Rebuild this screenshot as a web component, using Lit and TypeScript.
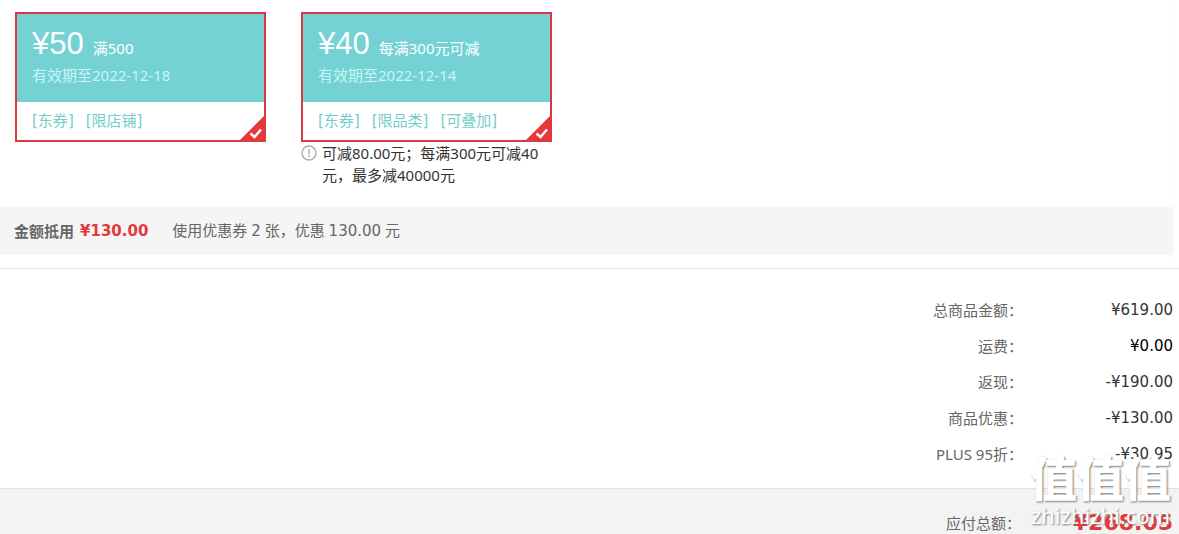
import { LitElement, html, css, nothing } from "lit";
import { customElement, property } from "lit/decorators.js";

interface Coupon {
  amount: string;
  condition: string;
  expiry: string;
  tags: string[];
  note?: string;
}

const coupons: Coupon[] = [
  { amount: "50", condition: "满500", expiry: "2022-12-18", tags: ["东券", "限店铺"] },
  {
    amount: "40",
    condition: "每满300元可减",
    expiry: "2022-12-14",
    tags: ["东券", "限品类", "可叠加"],
    note: "可减80.00元；每满300元可减40元，最多减40000元",
  },
];

const fees = [
  { label: "总商品金额", value: "¥619.00" },
  { label: "运费", value: "¥0.00", strong: true },
  { label: "返现", value: "-¥190.00" },
  { label: "商品优惠", value: "-¥130.00" },
  { label: "PLUS 95折", value: "-¥30.95" },
];

@customElement("coupon-card")
export class CouponCard extends LitElement {
  @property({ attribute: false }) coupon!: Coupon;

  static styles = css`
    :host {
      display: block;
      width: 251px;
    }
    .card {
      display: block;
      position: relative;
      border: 2px solid #d8393f;
      background: #fff;
      cursor: pointer;
    }
    .check {
      position: absolute;
      opacity: 0;
      margin: 0;
    }
    .face {
      display: block;
      padding: 14px 15px 10px;
      background: #74d2d4;
    }
    .price {
      display: flex;
      align-items: baseline;
      gap: 9px;
      line-height: 32px;
      color: #fff;
    }
    .amount {
      font-family: "Liberation Sans", sans-serif;
      font-size: 31px;
    }
    .expiry {
      display: block;
      line-height: 22px;
      padding-bottom: 6px;
      color: #c6f6f4;
    }
    .tags {
      display: flex;
      gap: 12px;
      padding: 0 15px;
      line-height: 38px;
      font-family: "DejaVu Sans", "Noto Sans CJK SC", sans-serif;
      color: #74cdca;
    }
    .corner {
      position: absolute;
      right: -2px;
      bottom: -2px;
      display: none;
    }
    .check:checked ~ .corner {
      display: block;
    }
    .note {
      display: flex;
      gap: 5px;
      margin: 0;
      line-height: 22px;
      color: #333;
    }
    .info {
      flex: none;
      margin-top: 3px;
    }
  `;

  render() {
    const c = this.coupon;
    return html`
      <label class="card">
        <input class="check" type="checkbox" checked />
        <span class="face">
          <span class="price"><span class="amount">¥${c.amount}</span><span>${c.condition}</span></span>
          <span class="expiry">有效期至${c.expiry}</span>
        </span>
        <span class="tags">${c.tags.map((t) => html`<span>[${t}]</span>`)}</span>
        <svg class="corner" width="28" height="28" viewBox="0 0 28 28" aria-hidden="true">
          <path d="M28 0V28H0Z" fill="#e4393c" />
          <path d="M12.500 19.500L16.500 23L23 15.500" fill="none" stroke="#fff" stroke-width="2.400" />
        </svg>
      </label>
      ${c.note
        ? html`<p class="note">
            <svg class="info" width="16" height="16" viewBox="0 0 16 16" aria-hidden="true">
              <circle cx="8" cy="8" r="7" fill="none" stroke="#aaa" stroke-width="1.400" />
              <path d="M8 4V9.500M8 10.500V12" stroke="#aaa" stroke-width="1.400" />
            </svg>
            <span>${c.note}</span>
          </p>`
        : nothing}
    `;
  }
}

@customElement("app-root")
export class AppRoot extends LitElement {
  static styles = css`
    :host {
      display: block;
      position: relative;
      min-height: 100vh;
      overflow: hidden;
      background: #fff;
      font-family: "Noto Sans", "Noto Sans CJK SC", sans-serif;
      font-size: 15px;
      color: #666;
    }
    .panel {
      margin-right: 4px;
      padding-bottom: 13px;
      border-right: 1px solid #fafafa;
    }
    .coupons {
      display: flex;
      flex-wrap: wrap;
      align-items: flex-start;
      gap: 35px;
      padding: 12px 15px 21px;
    }
    .used {
      display: flex;
      align-items: center;
      margin-right: 1px;
      padding: 0 14px;
      line-height: 47px;
      background: #f5f5f5;
    }
    .num {
      font-family: "DejaVu Sans", sans-serif;
    }
    .saved {
      margin: 0 24px 0 6px;
      font-family: "DejaVu Sans", sans-serif;
      font-weight: bold;
      color: #e4393c;
    }
    .fees {
      margin: 0;
      padding: 23px 6px 16px;
      border-top: 1px solid #eaeaea;
    }
    .row {
      display: flex;
      justify-content: flex-end;
      line-height: 36px;
    }
    .row dt,
    .row dd {
      margin: 0;
      text-align: right;
    }
    .row dd {
      width: 150px;
      font-family: "DejaVu Sans", sans-serif;
      color: #333;
    }
    .row .strong {
      color: #000;
    }
    .total {
      margin: 0;
      padding: 16px 6px 0;
      border-top: 1px solid #e2e2e2;
      background: #f3f3f3;
    }
    .row .due {
      width: 152px;
      font-size: 22px;
      font-weight: bold;
      color: #e4393c;
    }
    .mark {
      position: absolute;
      right: 8px;
      bottom: 14px;
      display: grid;
      justify-items: center;
      color: #fff;
      text-shadow: 1px 1px 2px #777;
      pointer-events: none;
    }
    .logo {
      font-size: 47px;
      line-height: 49px;
      font-weight: 900;
    }
    .site {
      font-size: 22px;
      line-height: 24px;
    }
  `;

  render() {
    return html`
      <section class="panel">
        <div class="coupons">
          ${coupons.map((c) => html`<coupon-card .coupon=${c}></coupon-card>`)}
        </div>
        <div class="used">
          <b>金额抵用</b>
          <span class="saved">¥130.00</span>
          <span>使用优惠券 <span class="num">2</span> 张，优惠 <span class="num">130.00</span> 元</span>
        </div>
      </section>
      <dl class="fees">
        ${fees.map(
          (f) => html`<div class="row">
            <dt>${f.label}：</dt>
            <dd class=${f.strong ? "strong" : ""}>${f.value}</dd>
          </div>`
        )}
      </dl>
      <dl class="total">
        <div class="row">
          <dt>应付总额：</dt>
          <dd class="due">¥268.05</dd>
        </div>
      </dl>
      <div class="mark">
        <span class="logo">值值值</span>
        <span class="site">zhizhizhi.com</span>
      </div>
    `;
  }
}
